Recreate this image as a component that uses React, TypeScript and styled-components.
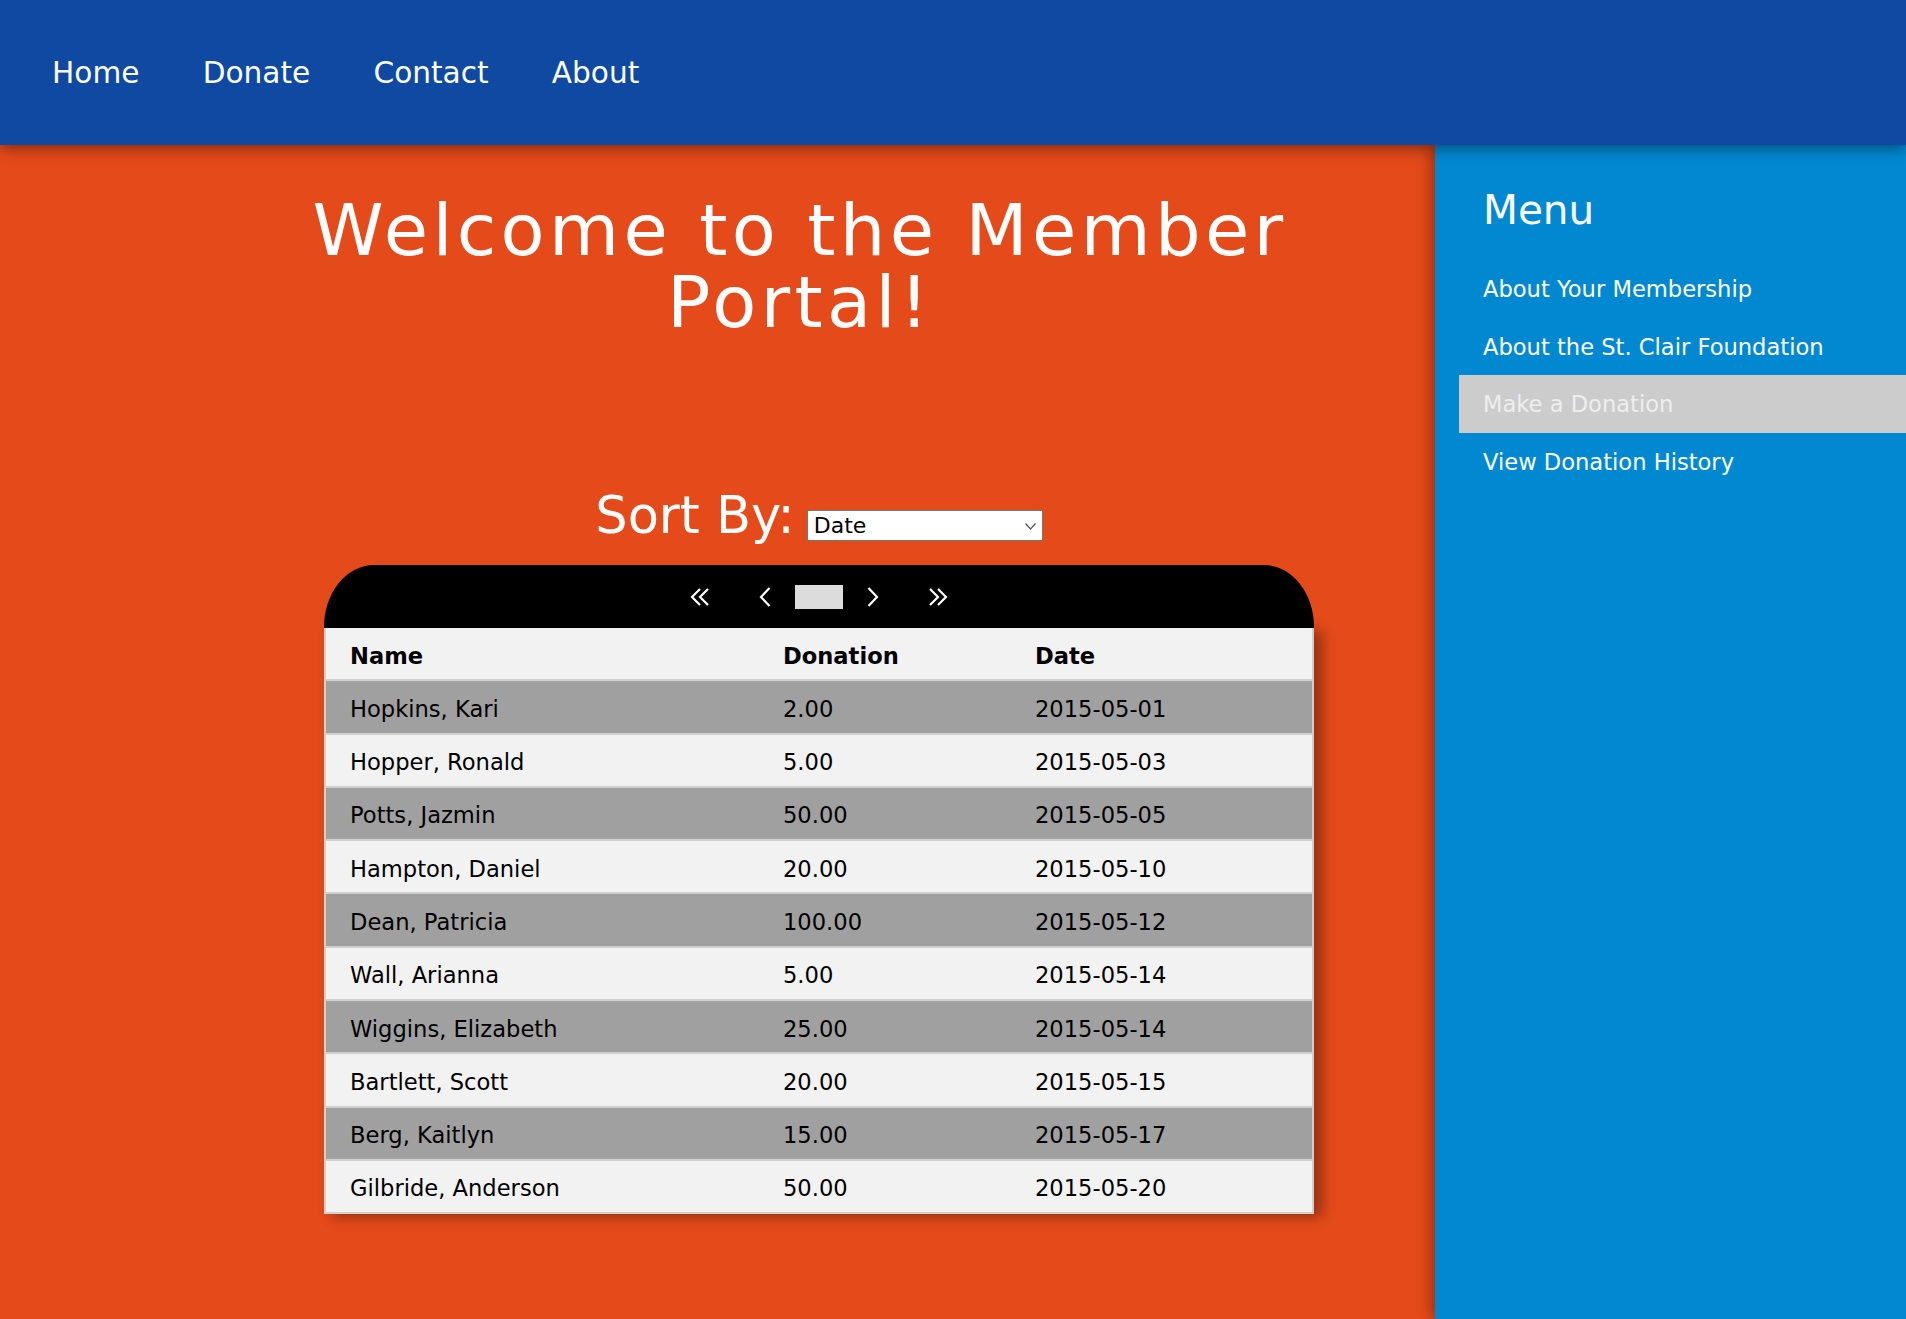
import React from "react";
import styled, { createGlobalStyle } from "styled-components";

const GlobalStyle = createGlobalStyle`
  html, body {
    margin: 0;
    padding: 0;
    height: 100%;
  }
  body {
    font-family: "DejaVu Sans", Verdana, sans-serif;
    background: #e44a1a;
  }
  #root {
    min-height: 100%;
  }
`;

const Page = styled.div`
  display: flex;
  flex-direction: column;
  min-height: 100vh;
`;

const TopBar = styled.header`
  position: relative;
  z-index: 3;
  height: 145px;
  flex: 0 0 auto;
  display: flex;
  align-items: center;
  padding-left: 20.5px;
  background: #0f49a2;
  box-shadow: 0 3px 14px rgba(0, 0, 0, 0.45);
`;

const NavLink = styled.a`
  padding: 0 31.6px;
  font-size: 29.6px;
  color: #ffffff;
  text-decoration: none;
  cursor: pointer;
`;

const Body = styled.div`
  flex: 1;
  display: flex;
`;

const Main = styled.main`
  flex: 1;
  display: flex;
  flex-direction: column;
  align-items: flex-start;
  background: #e44a1a;
`;

const Title = styled.h1`
  margin: 49px 0 0 300px;
  width: 1000px;
  text-align: center;
  font-size: 72px;
  line-height: 72px;
  font-weight: normal;
  letter-spacing: 4.3px;
  color: #ffffff;
`;

const Content = styled.section`
  margin: 150px 0 0 324px;
  width: 990px;
  display: flex;
  flex-direction: column;
`;

const SortRow = styled.div`
  display: flex;
  justify-content: center;
  align-items: baseline;
  gap: 12px;
`;

const SortLabel = styled.label`
  font-size: 51px;
  line-height: 56px;
  color: #ffffff;
`;

const SelectWrap = styled.span`
  position: relative;
  display: inline-block;
`;

const SortSelect = styled.select`
  appearance: none;
  -webkit-appearance: none;
  width: 236px;
  height: 31px;
  box-sizing: border-box;
  border: 1px solid #767676;
  border-radius: 0;
  background: #ffffff;
  color: #000000;
  font-family: "DejaVu Sans", Verdana, sans-serif;
  font-size: 22px;
  padding: 0 0 0 6px;
  outline: none;
`;

const Chevron = styled.svg`
  position: absolute;
  right: 7px;
  top: 13px;
  pointer-events: none;
`;

const Card = styled.div`
  margin-top: 21px;
  display: flex;
  flex-direction: column;
`;

const PagerBar = styled.div`
  height: 63px;
  background: #000000;
  border-radius: 50px 50px 0 0 / 62px 62px 0 0;
  display: flex;
  align-items: center;
  justify-content: center;
  gap: 24px;
`;

const PagerButton = styled.button<{ $outer?: "left" | "right" }>`
  display: flex;
  align-items: center;
  justify-content: center;
  padding: 0;
  border: none;
  background: none;
  cursor: pointer;
  margin-right: ${(p) => (p.$outer === "left" ? "25px" : "0")};
  margin-left: ${(p) => (p.$outer === "right" ? "25px" : "0")};
`;

const PageInput = styled.input`
  width: 48px;
  height: 24px;
  box-sizing: border-box;
  border: none;
  background: #dcdcdc;
  padding: 0;
  outline: none;
`;

const Table = styled.table`
  width: 990px;
  border-collapse: collapse;
  table-layout: fixed;
  border: 2px solid #d0d0d0;
  border-top: none;
  box-shadow: 8px 3px 12px rgba(0, 0, 0, 0.35);
  font-size: 22.6px;
  color: #000000;
`;

const Row = styled.tr<{ $shade: boolean }>`
  background: ${(p) => (p.$shade ? "#a0a0a0" : "#f2f2f2")};
  border-bottom: 2px solid #d0d0d0;
`;

const HeadCell = styled.th`
  text-align: left;
  font-weight: bold;
  padding: 16.6px 24px 12.7px 24px;
  line-height: 22px;
`;

const Cell = styled.td`
  padding: 16.6px 24px 12.7px 24px;
  line-height: 22px;
  white-space: nowrap;
`;

const Sidebar = styled.aside`
  position: relative;
  z-index: 2;
  width: 471px;
  flex: 0 0 471px;
  background: #0288d1;
  box-shadow: -5px 0 12px rgba(0, 0, 0, 0.3);
  padding-left: 24px;
  box-sizing: border-box;
`;

const MenuTitle = styled.h2`
  margin: 41px 0 26px 0;
  padding-left: 24px;
  font-size: 40.5px;
  line-height: 48px;
  font-weight: normal;
  color: #ffffff;
`;

const MenuList = styled.ul`
  list-style: none;
  margin: 0;
  padding: 0;
`;

const MenuItem = styled.li<{ $active?: boolean }>`
  height: 57.6px;
  line-height: 57.6px;
  padding-left: 24px;
  font-size: 22.6px;
  color: ${(p) => (p.$active ? "#eeeeee" : "#ffffff")};
  background: ${(p) => (p.$active ? "#cccccc" : "transparent")};
  cursor: pointer;
`;

const MenuText = styled.span`
  position: relative;
  top: 1px;
`;

const rows = [
  ["Hopkins, Kari", "2.00", "2015-05-01"],
  ["Hopper, Ronald", "5.00", "2015-05-03"],
  ["Potts, Jazmin", "50.00", "2015-05-05"],
  ["Hampton, Daniel", "20.00", "2015-05-10"],
  ["Dean, Patricia", "100.00", "2015-05-12"],
  ["Wall, Arianna", "5.00", "2015-05-14"],
  ["Wiggins, Elizabeth", "25.00", "2015-05-14"],
  ["Bartlett, Scott", "20.00", "2015-05-15"],
  ["Berg, Kaitlyn", "15.00", "2015-05-17"],
  ["Gilbride, Anderson", "50.00", "2015-05-20"],
];

const SingleLeft = () => (
  <svg width="12" height="22" viewBox="0 0 12 22">
    <polyline points="10.5,2 2,11 10.5,20" fill="none" stroke="#fff" strokeWidth="2.2" />
  </svg>
);
const SingleRight = () => (
  <svg width="12" height="22" viewBox="0 0 12 22">
    <polyline points="1.5,2 10,11 1.5,20" fill="none" stroke="#fff" strokeWidth="2.2" />
  </svg>
);
const DoubleLeft = () => (
  <svg width="20" height="22" viewBox="0 0 20 22">
    <polyline points="10,3 2,11 10,19" fill="none" stroke="#fff" strokeWidth="2.2" />
    <polyline points="18,3 10,11 18,19" fill="none" stroke="#fff" strokeWidth="2.2" />
  </svg>
);
const DoubleRight = () => (
  <svg width="20" height="22" viewBox="0 0 20 22">
    <polyline points="2,3 10,11 2,19" fill="none" stroke="#fff" strokeWidth="2.2" />
    <polyline points="10,3 18,11 10,19" fill="none" stroke="#fff" strokeWidth="2.2" />
  </svg>
);

const menu = [
  "About Your Membership",
  "About the St. Clair Foundation",
  "Make a Donation",
  "View Donation History",
];

export default function App() {
  return (
    <>
      <GlobalStyle />
      <Page>
        <TopBar>
          <NavLink>Home</NavLink>
          <NavLink>Donate</NavLink>
          <NavLink>Contact</NavLink>
          <NavLink>About</NavLink>
        </TopBar>
        <Body>
          <Main>
            <Title>Welcome to the Member Portal!</Title>
            <Content>
              <SortRow>
                <SortLabel htmlFor="sort">Sort By:</SortLabel>
                <SelectWrap>
                  <SortSelect id="sort" defaultValue="Date">
                    <option>Date</option>
                    <option>Name</option>
                    <option>Donation</option>
                  </SortSelect>
                  <Chevron width="11" height="7" viewBox="0 0 11 7">
                    <polyline points="0.5,0.5 5.5,6 10.5,0.5" fill="none" stroke="#555" strokeWidth="1.2" />
                  </Chevron>
                </SelectWrap>
              </SortRow>
              <Card>
                <PagerBar>
                  <PagerButton $outer="left" aria-label="First page">
                    <DoubleLeft />
                  </PagerButton>
                  <PagerButton aria-label="Previous page">
                    <SingleLeft />
                  </PagerButton>
                  <PageInput readOnly value="" />
                  <PagerButton aria-label="Next page">
                    <SingleRight />
                  </PagerButton>
                  <PagerButton $outer="right" aria-label="Last page">
                    <DoubleRight />
                  </PagerButton>
                </PagerBar>
                <Table>
                  <colgroup>
                    <col style={{ width: "434px" }} />
                    <col style={{ width: "252px" }} />
                    <col />
                  </colgroup>
                  <thead>
                    <Row $shade={false}>
                      <HeadCell>Name</HeadCell>
                      <HeadCell>Donation</HeadCell>
                      <HeadCell>Date</HeadCell>
                    </Row>
                  </thead>
                  <tbody>
                    {rows.map((r, i) => (
                      <Row key={i} $shade={i % 2 === 0}>
                        <Cell>{r[0]}</Cell>
                        <Cell>{r[1]}</Cell>
                        <Cell>{r[2]}</Cell>
                      </Row>
                    ))}
                  </tbody>
                </Table>
              </Card>
            </Content>
          </Main>
          <Sidebar>
            <MenuTitle>Menu</MenuTitle>
            <MenuList>
              {menu.map((m) => (
                <MenuItem key={m} $active={m === "Make a Donation"}>
                  <MenuText>{m}</MenuText>
                </MenuItem>
              ))}
            </MenuList>
          </Sidebar>
        </Body>
      </Page>
    </>
  );
}
